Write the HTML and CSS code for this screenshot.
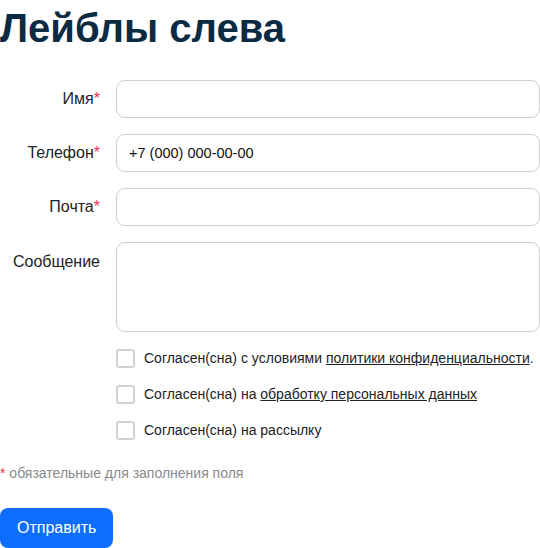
FILE: index.html
```html
<!DOCTYPE html>
<html lang="ru">
<head>
<meta charset="utf-8">
<title>Лейблы слева</title>
<link rel="stylesheet" href="styles.css">
</head>
<body>
<h1 class="title">Лейблы слева</h1>
<form class="form">
  <label class="label" for="name">Имя<span class="req">*</span></label>
  <input class="field" id="name" type="text">
  <label class="label" for="phone">Телефон<span class="req">*</span></label>
  <input class="field" id="phone" type="text" value="+7 (000) 000-00-00">
  <label class="label" for="mail">Почта<span class="req">*</span></label>
  <input class="field" id="mail" type="text">
  <label class="label label-top" for="msg">Сообщение</label>
  <textarea class="field area" id="msg"></textarea>
  <div class="checks">
    <label class="check"><input class="box" type="checkbox"><span>Согласен(сна) с условиями <a class="link" href="#">политики конфиденциальности</a>.</span></label>
    <label class="check"><input class="box" type="checkbox"><span>Согласен(сна) на <a class="link" href="#">обработку персональных данных</a></span></label>
    <label class="check"><input class="box" type="checkbox"><span>Согласен(сна) на рассылку</span></label>
  </div>
</form>
<p class="note"><span class="req">*</span> обязательные для заполнения поля</p>
<button class="submit" type="button">Отправить</button>
</body>
</html>
```
FILE: styles.css
```css
html, body {
  margin: 0;
  padding: 0;
  background: #fff;
}
body {
  font-family: "Liberation Sans", Arial, sans-serif;
  color: #222;
}
.title {
  margin: 4px 0 28px;
  font-size: 40px;
  line-height: 48px;
  font-weight: 700;
  color: #0b2b42;
}
.form {
  display: grid;
  grid-template-columns: 100px 1fr;
  column-gap: 16px;
  row-gap: 16px;
}
.label {
  font-size: 16px;
  line-height: 38px;
  text-align: right;
  color: #222;
}
.label-top {
  line-height: 40px;
}
.req {
  color: #e4324c;
}
.field {
  box-sizing: border-box;
  width: 100%;
  height: 38px;
  margin: 0;
  border: 1px solid #cfcfcf;
  border-radius: 9px;
  padding: 0 12px;
  font-family: "Liberation Sans", Arial, sans-serif;
  font-size: 14.5px;
  color: #111;
  background: #fff;
  outline: none;
}
.area {
  height: 90px;
  resize: none;
  padding: 10px 12px;
}
.checks {
  grid-column: 2;
  display: flex;
  flex-direction: column;
  gap: 16px;
  margin-top: 0;
}
.check {
  display: flex;
  align-items: center;
  gap: 9px;
  height: 20px;
  font-size: 14px;
  color: #222;
}
.box {
  appearance: none;
  -webkit-appearance: none;
  box-sizing: border-box;
  width: 19px;
  height: 19px;
  margin: 0;
  border: 2px solid #d2d2d2;
  border-radius: 3px;
  background: #fff;
  flex: none;
}
.link {
  color: #222;
  text-decoration: underline;
}
.note {
  margin: 23px 0 0;
  font-size: 14px;
  line-height: 20px;
  color: #8a8a8a;
}
.submit {
  display: block;
  margin-top: 25px;
  height: 40px;
  padding: 0 17px;
  border: none;
  border-radius: 8px;
  background: #0d6efd;
  color: #fff;
  font-family: "Liberation Sans", Arial, sans-serif;
  font-size: 16px;
}
```
